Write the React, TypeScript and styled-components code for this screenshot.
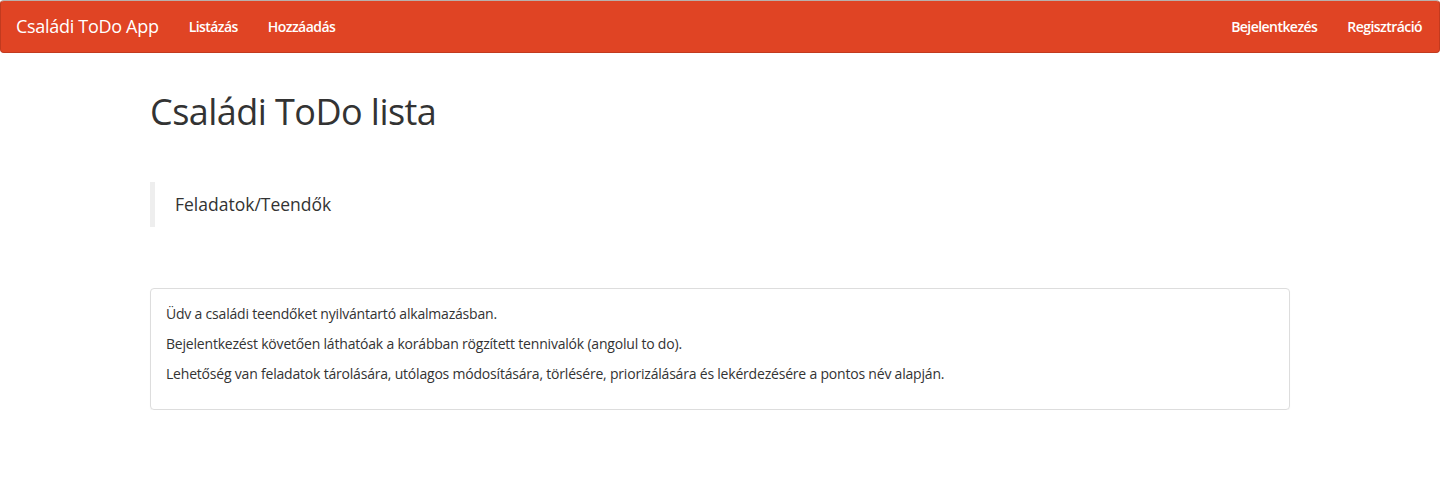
import React from 'react';
import styled, { createGlobalStyle } from 'styled-components';

const GlobalStyle = createGlobalStyle`
  * { box-sizing: border-box; }
  body {
    margin: 0;
    background: #ffffff;
    color: #333333;
    font-family: "Open Sans", "Liberation Sans", sans-serif;
    font-size: 14px;
    line-height: 1.42857;
  }
`;

const leftLinks = ['Listázás', 'Hozzáadás'];
const rightLinks = ['Bejelentkezés', 'Regisztráció'];

const paragraphs = [
  'Üdv a családi teendőket nyilvántartó alkalmazásban.',
  'Bejelentkezést követően láthatóak a korábban rögzített tennivalók (angolul to do).',
  'Lehetőség van feladatok tárolására, utólagos módosítására, törlésére, priorizálására és lekérdezésére a pontos név alapján.',
];

export default function App() {
  return (
    <>
      <GlobalStyle />
      <Navbar>
        <Brand href="#">Családi ToDo App</Brand>
        <NavGroup>
          {leftLinks.map((l) => (
            <NavLink key={l} href="#">{l}</NavLink>
          ))}
        </NavGroup>
        <NavGroup $right>
          {rightLinks.map((l) => (
            <NavLink key={l} href="#">{l}</NavLink>
          ))}
        </NavGroup>
      </Navbar>
      <Container>
        <Title>Családi ToDo lista</Title>
        <Quote>Feladatok/Teendők</Quote>
        <Panel>
          {paragraphs.map((p) => (
            <Para key={p}>{p}</Para>
          ))}
        </Panel>
      </Container>
    </>
  );
}

const Navbar = styled.nav`
  display: flex;
  align-items: stretch;
  height: 53px;
  padding: 0 2px 0 0;
  background: #e04424;
  border: 1px solid #c23a1f;
  border-top-color: #b8b0ac;
  border-radius: 4px;
`;

const Brand = styled.a`
  display: flex;
  align-items: center;
  padding: 0 15px;
  font-size: 18px;
  color: #ffffff;
  text-decoration: none;
  letter-spacing: -0.3px;
`;

const NavGroup = styled.div<{ $right?: boolean }>`
  display: flex;
  margin-left: ${(p) => (p.$right ? 'auto' : '0')};
`;

const NavLink = styled.a`
  display: flex;
  align-items: center;
  padding: 0 15px;
  font-size: 14px;
  font-weight: 600;
  color: #ffffff;
  text-decoration: none;
  letter-spacing: -0.55px;
`;

const Container = styled.div`
  width: 1170px;
  margin: 0 auto;
  padding: 0 15px;
`;

const Title = styled.h1`
  margin: 39px 0 50px;
  font-size: 36px;
  font-weight: 400;
  line-height: 1.1;
  letter-spacing: -0.55px;
`;

const Quote = styled.blockquote`
  margin: 0 0 61px;
  padding: 10px 20px;
  border-left: 5px solid #eeeeee;
  font-size: 17.5px;
  line-height: 25px;
  letter-spacing: 0;
`;

const Panel = styled.div`
  padding: 15px;
  border: 1px solid #dddddd;
  border-radius: 4px;
  box-shadow: 0 1px 1px rgba(0, 0, 0, 0.05);
`;

const Para = styled.p`
  margin: 0 0 10px;
  font-size: 14px;
  line-height: 20px;
  letter-spacing: -0.2px;
`;
